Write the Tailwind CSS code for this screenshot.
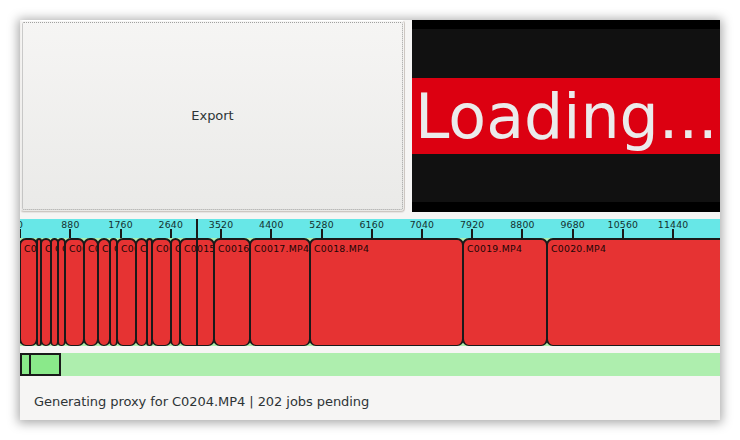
<!DOCTYPE html>
<html lang="en">
<head>
<meta charset="utf-8">
<title>Export</title>
<script src="https://cdn.jsdelivr.net/npm/@tailwindcss/browser@4"></script>
</head>
<body class="bg-white p-[20px] font-['DejaVu_Sans',sans-serif] text-[#2e3436] overflow-hidden">
<main class="flex h-[400px] w-[700px] flex-col bg-[#f6f5f4] shadow-[0_1px_10px_2px_rgba(0,0,0,0.34)]">
  <section class="flex h-[192px] gap-[7px]">
    <button class="w-[385px] rounded-[4px] border border-[#cdc7c2] border-l-[#f1efed] border-t-white bg-linear-to-b from-[#f6f5f4] to-[#eaeae8] p-px text-[13px] tracking-[-0.05px] shadow-[0_1px_1px_rgba(0,0,0,0.07)]">
      <span class="flex h-full w-full items-center justify-center rounded-[2px] border border-dotted border-[#a0a09f] pb-px">Export</span>
    </button>
    <div class="flex w-[308px] flex-col bg-black py-[9px] pb-[10px]">
      <div class="h-[49px] bg-[#111]"></div>
      <div class="h-[76px] overflow-hidden whitespace-nowrap bg-[#dc0011] pl-[3px] text-[61.8px] leading-[78px] text-[#ebebeb]">Loading...</div>
      <div class="h-[48px] bg-[#111]"></div>
    </div>
  </section>
  <section class="relative mt-[7px] h-[127px] overflow-hidden bg-[#aeeeae]">
    <div id="ruler" class="-ml-[25px] flex h-[19px] w-[800px] bg-[#67e7e7] text-[9.33px] leading-[12px] tracking-[0.2px] text-[#14302f]"></div>
    <div id="clips" class="-ml-px flex h-[108px] w-[900px] text-[9.33px] leading-[12px] tracking-[0.25px] text-[#1c0606]"></div>
    <div class="absolute left-[176px] top-0 h-full w-[2px] bg-[#1a1a1a]"></div>
  </section>
  <section class="mt-[7px] flex h-[23px] bg-[#aeeeae]">
    <div class="w-[12px] border-2 border-r-0 border-[#1a1a1a] bg-[#8ae98a]"></div>
    <div class="-ml-[3px] w-[32px] border-2 border-[#1a1a1a] bg-[#8ae98a]"></div>
  </section>
  <footer class="flex h-[44px] items-center px-[14px] pt-[7px] text-[13px] tracking-[-0.06px]">Generating proxy for C0204.MP4 | 202 jobs pending</footer>
</main>
<script>
const ruler = document.getElementById('ruler');
for (let i = 0; i < 14; i++) {
  ruler.insertAdjacentHTML('beforeend', `<div class="flex shrink-0 flex-col items-center" style="width:50.24px"><span>${i * 880}</span><span class="-mt-[2px] h-[9px] w-[2px] bg-[#1a1a1a]"></span></div>`);
}
const edges = [20, 37, 41, 51, 58, 65, 84, 98, 110, 117, 136, 147, 152, 171, 180, 214, 250, 310, 463, 547, 760];
const clips = document.getElementById('clips');
for (let i = 0; i < edges.length - 1; i++) {
  const name = 'C00' + String(i + 1).padStart(2, '0') + '.MP4';
  clips.insertAdjacentHTML('beforeend', `<div class="-mr-[2px] shrink-0 overflow-hidden rounded-[7px] border-2 border-b border-[#1a1a1a] bg-[#e63333] pt-[3px]" style="width:${edges[i + 1] - edges[i] + 2}px"><span class="ml-[3px]">${name}</span></div>`);
}
</script>
</body>
</html>
